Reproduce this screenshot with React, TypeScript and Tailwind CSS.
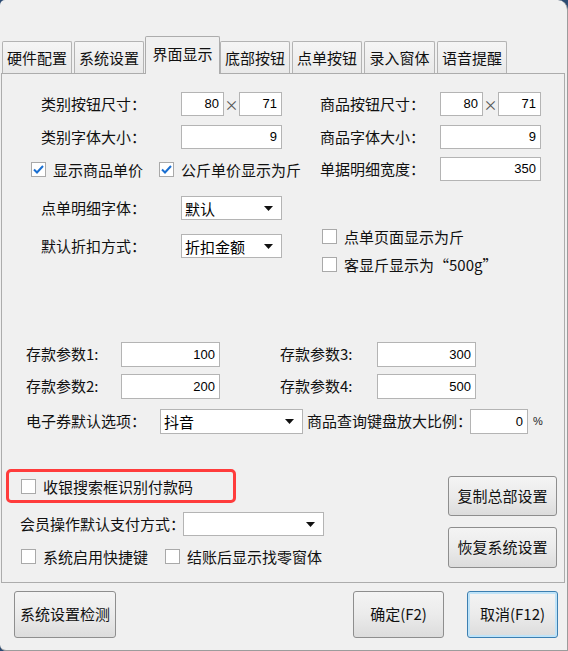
const cjk = "font-['Microsoft_YaHei','Noto_Sans_CJK_SC',sans-serif]";
const num = "font-['Liberation_Sans','Noto_Sans_CJK_SC',sans-serif]";

const tabs = [
  { label: '硬件配置', w: 'w-[70px]', ml: 'ml-[2px]' },
  { label: '系统设置', w: 'w-[70px]', ml: 'ml-[2px]' },
  { label: '界面显示', w: 'w-[75px]', ml: 'ml-[1px]', active: true },
  { label: '底部按钮', w: 'w-[70px]', ml: 'ml-[0px]' },
  { label: '点单按钮', w: 'w-[70px]', ml: 'ml-[2px]' },
  { label: '录入窗体', w: 'w-[71px]', ml: 'ml-[2px]' },
  { label: '语音提醒', w: 'w-[70px]', ml: 'ml-[2px]' },
];

function NumBox({ value, w }: { value: string; w: string }) {
  return (
    <div
      className={`${w} h-[24px] bg-white border border-[#b4b4b4] flex items-center justify-end pr-[4px] text-[13px] text-black ${num}`}
    >
      {value}
    </div>
  );
}

function Dropdown({ value, w }: { value: string; w: string }) {
  return (
    <div className={`${w} h-[24px] bg-white border border-[#b4b4b4] flex items-center pl-[3px] pr-[8px]`}>
      <span className="flex-1 text-[15px] leading-none text-black">{value}</span>
      <svg width="9" height="5" viewBox="0 0 9 5">
        <path d="M0 0 H9 L4.5 5 Z" fill="#111" />
      </svg>
    </div>
  );
}

function Check({ label, checked = false }: { label: string; checked?: boolean }) {
  return (
    <div className="flex items-center">
      <div className="w-[15px] h-[15px] bg-white border border-[#a9a9a9] flex items-center justify-center">
        {checked && (
          <svg width="11" height="9" viewBox="0 0 11 9">
            <path d="M1 4.5 L4 7.5 L10 1" stroke="#1a6fd1" strokeWidth="2" fill="none" />
          </svg>
        )}
      </div>
      <span className="ml-[7px] text-[15px] leading-none text-[#111] whitespace-nowrap">{label}</span>
    </div>
  );
}

function Btn({ label, w, h, focus = false }: { label: string; w: string; h: string; focus?: boolean }) {
  return (
    <div
      className={`${w} ${h} rounded-[3px] border flex items-center justify-center text-[15px] text-[#111] bg-gradient-to-b from-[#f4f4f4] via-[#ebebeb] to-[#dcdcdc] ${
        focus ? 'border-[#3c7fb1] shadow-[inset_0_0_0_2px_#bfe3f8]' : 'border-[#8e8e8e]'
      }`}
    >
      {label}
    </div>
  );
}

export default function App() {
  return (
    <div className={`w-[568px] h-[651px] bg-[#2c4b73] overflow-hidden ${cjk}`}>
      <div className="w-full h-full bg-[#f0f0f0] rounded-tl-[5px] rounded-tr-[10px] rounded-bl-[6px] border-r border-b border-[#9c9c9c] flex flex-col">
        <div className="h-[36px] shrink-0" />

        {/* tabs */}
        <div className="h-[37px] shrink-0 flex items-end relative z-10">
          {tabs.map((t) =>
            t.active ? (
              <div
                key={t.label}
                className={`${t.w} ${t.ml} h-[38px] -mb-px bg-[#f0f0f0] border border-b-0 border-[#acacac] rounded-t-[2px] flex items-center justify-center pb-[2px] text-[15px] text-[#111]`}
              >
                {t.label}
              </div>
            ) : (
              <div
                key={t.label}
                className={`${t.w} ${t.ml} h-[32px] bg-gradient-to-b from-[#f5f5f5] to-[#e9e9e9] border border-b-0 border-[#b3b3b3] rounded-t-[2px] flex items-center justify-center pt-[1px] text-[15px] text-[#111]`}
              >
                {t.label}
              </div>
            )
          )}
        </div>

        {/* tab panel */}
        <div className="h-[510px] shrink-0 ml-[1px] mr-[2px] border border-[#acacac] flex flex-col">
          {/* row 1 */}
          <div className="mt-[18px] flex items-center h-[24px]">
            <div className="w-[318px] pl-[39px] flex items-center">
              <span className="w-[140px] text-[15px] text-[#111]">类别按钮尺寸：</span>
              <NumBox value="80" w="w-[43px]" />
              <span className="w-[15px] text-center text-[14px] text-[#555]">×</span>
              <NumBox value="71" w="w-[43px]" />
            </div>
            <span className="w-[120px] text-[15px] text-[#111]">商品按钮尺寸：</span>
            <NumBox value="80" w="w-[43px]" />
            <span className="w-[15px] text-center text-[14px] text-[#555]">×</span>
            <NumBox value="71" w="w-[43px]" />
          </div>

          {/* row 2 */}
          <div className="mt-[9px] flex items-center h-[24px]">
            <div className="w-[318px] pl-[39px] flex items-center">
              <span className="w-[140px] text-[15px] text-[#111]">类别字体大小：</span>
              <NumBox value="9" w="w-[101px]" />
            </div>
            <span className="w-[120px] text-[15px] text-[#111]">商品字体大小：</span>
            <NumBox value="9" w="w-[101px]" />
          </div>

          {/* row 3 */}
          <div className="mt-[8px] flex items-center h-[24px]">
            <div className="w-[318px] pl-[29px] flex items-center">
              <Check label="显示商品单价" checked />
              <div className="ml-[16px]">
                <Check label="公斤单价显示为斤" checked />
              </div>
            </div>
            <span className="w-[120px] text-[15px] text-[#111]">单据明细宽度：</span>
            <NumBox value="350" w="w-[101px]" />
          </div>

          {/* rows 4-5 */}
          <div className="flex">
            <div className="w-[320px] pl-[39px] flex flex-col">
              <div className="mt-[15px] flex items-center h-[24px]">
                <span className="w-[140px] text-[15px] text-[#111]">点单明细字体：</span>
                <Dropdown value="默认" w="w-[101px]" />
              </div>
              <div className="mt-[14px] flex items-center h-[24px]">
                <span className="w-[140px] text-[15px] text-[#111]">默认折扣方式：</span>
                <Dropdown value="折扣金额" w="w-[101px]" />
              </div>
            </div>
            <div className="flex flex-col">
              <div className="mt-[48px]">
                <Check label="点单页面显示为斤" />
              </div>
              <div className="mt-[13px]">
                <Check label="客显斤显示为“500g”" />
              </div>
            </div>
          </div>

          {/* deposit params */}
          <div className="mt-[70px] flex items-center h-[25px] pl-[24px]">
            <span className="w-[95px] text-[15px] text-[#111]">存款参数1:</span>
            <NumBox value="100" w="w-[99px] h-[25px]" />
            <span className="ml-[60px] w-[97px] text-[15px] text-[#111]">存款参数3:</span>
            <NumBox value="300" w="w-[99px] h-[25px]" />
          </div>
          <div className="mt-[7px] flex items-center h-[25px] pl-[24px]">
            <span className="w-[95px] text-[15px] text-[#111]">存款参数2:</span>
            <NumBox value="200" w="w-[99px] h-[25px]" />
            <span className="ml-[60px] w-[97px] text-[15px] text-[#111]">存款参数4:</span>
            <NumBox value="500" w="w-[99px] h-[25px]" />
          </div>
          <div className="mt-[10px] flex items-center h-[25px] pl-[24px]">
            <span className="w-[134px] text-[15px] text-[#111]">电子券默认选项：</span>
            <Dropdown value="抖音" w="w-[143px] h-[25px]" />
            <span className="ml-[4px] w-[163px] text-[15px] text-[#111] whitespace-nowrap">商品查询键盘放大比例：</span>
            <NumBox value="0" w="w-[58px] h-[25px]" />
            <span className={`ml-[5px] text-[11px] text-[#222] ${num}`}>%</span>
          </div>

          {/* lower area */}
          <div className="mt-[35px] flex">
            <div className="flex-1 flex flex-col">
              <div className="ml-[4px] w-[230px] h-[34px] border-[3px] border-[#ff3c3c] rounded-[5px] flex items-center pl-[12px]">
                <Check label="收银搜索框识别付款码" />
              </div>
              <div className="mt-[9px] flex items-center h-[24px] pl-[18px]">
                <span className="w-[163px] text-[15px] text-[#111] whitespace-nowrap">会员操作默认支付方式：</span>
                <Dropdown value="" w="w-[141px]" />
              </div>
              <div className="mt-[13px] flex items-center pl-[19px]">
                <Check label="系统启用快捷键" />
                <div className="ml-[17px]">
                  <Check label="结账后显示找零窗体" />
                </div>
              </div>
            </div>
            <div className="pt-[7px] mr-[7px] flex flex-col">
              <Btn label="复制总部设置" w="w-[109px]" h="h-[40px]" />
              <div className="mt-[11px]">
                <Btn label="恢复系统设置" w="w-[109px]" h="h-[41px]" />
              </div>
            </div>
          </div>
        </div>

        {/* bottom bar */}
        <div className="flex pt-[8px]">
          <div className="ml-[14px]">
            <Btn label="系统设置检测" w="w-[102px]" h="h-[47px]" />
          </div>
          <div className="ml-[237px]">
            <Btn label="确定(F2)" w="w-[91px]" h="h-[47px]" />
          </div>
          <div className="ml-[23px]">
            <Btn label="取消(F12)" w="w-[91px]" h="h-[47px]" focus />
          </div>
        </div>
      </div>
    </div>
  );
}
